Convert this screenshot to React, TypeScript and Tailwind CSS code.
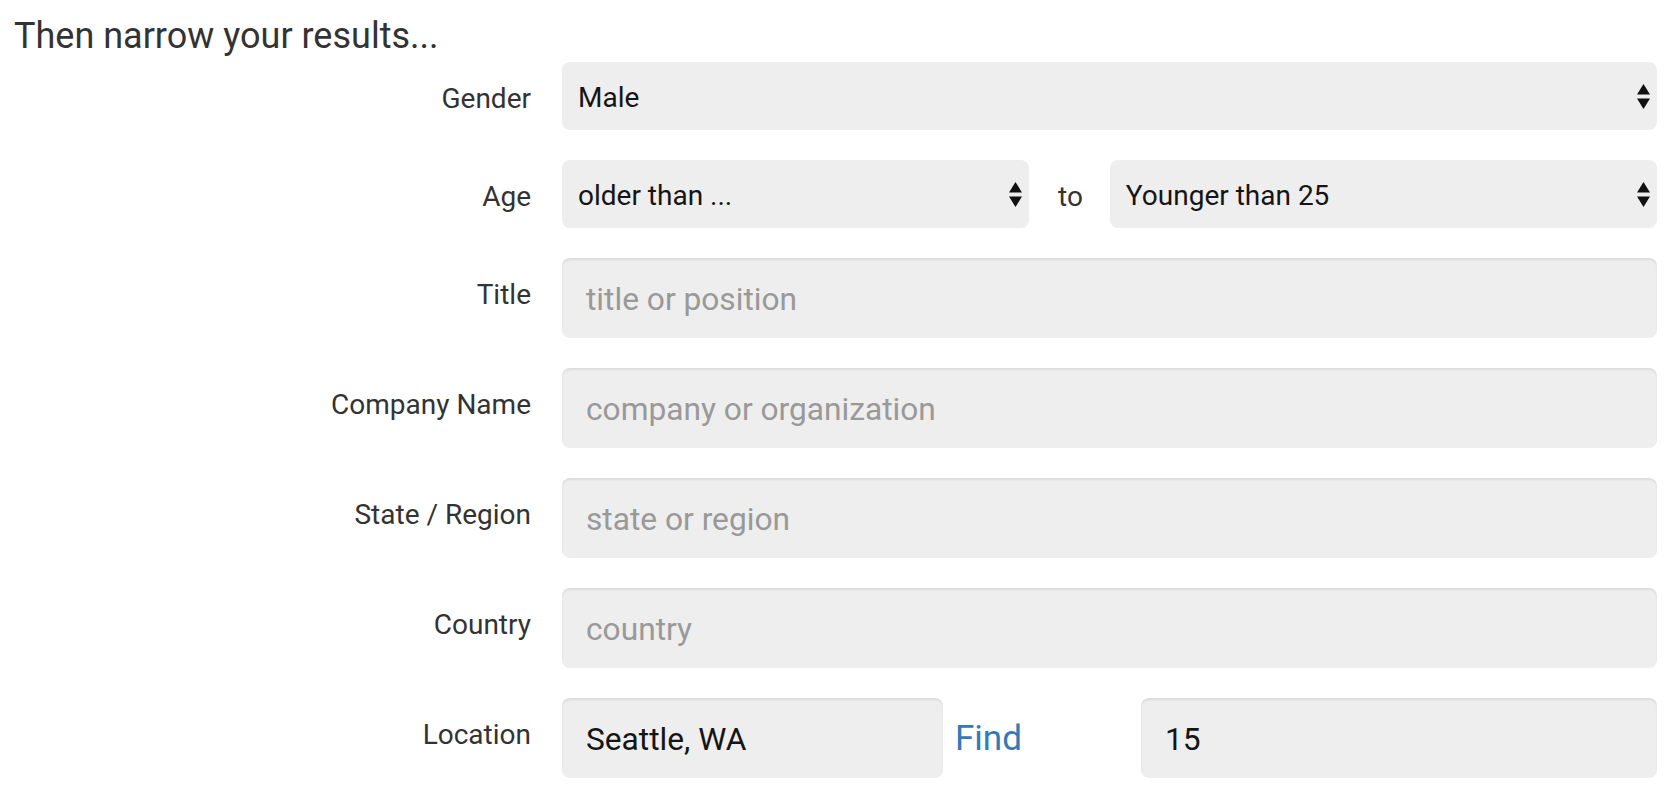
import React from "react";

const Arrows = () => (
  <svg width="13" height="25" viewBox="0 0 13 25" className="shrink-0">
    <polygon points="0,10.5 6.5,0 13,10.5" fill="#111" />
    <polygon points="0,14.5 13,14.5 6.5,25" fill="#111" />
  </svg>
);

const Select = ({ value, className = "" }: { value: string; className?: string }) => (
  <div
    className={`h-[68px] bg-[#eeeeee] rounded-[8px] flex items-center justify-between pl-[16px] pr-[7px] text-[28px] text-[#151515] ${className}`}
  >
    <span className="pt-[4px]">{value}</span>
    <Arrows />
  </div>
);

const Input = ({
  value,
  placeholder,
  className = "",
}: {
  value?: string;
  placeholder?: string;
  className?: string;
}) => (
  <div
    className={`h-[80px] bg-[#eeeeee] rounded-[8px] flex items-center pl-[24px] pt-[3px] text-[31.7px] shadow-[inset_0_2px_2px_rgba(0,0,0,0.075)] ${className}`}
  >
    {value ? (
      <span className="text-[#151515]">{value}</span>
    ) : (
      <span className="text-[#999999]">{placeholder}</span>
    )}
  </div>
);

const SelectRow = ({ label, children }: { label: string; children: React.ReactNode }) => (
  <div className="flex items-center">
    <div className="w-[517px] pt-[5px] text-right text-[28px] text-[#333333] shrink-0">{label}</div>
    <div className="ml-[31px] w-[1095px] flex items-center">{children}</div>
  </div>
);

const InputRow = ({ label, children }: { label: string; children: React.ReactNode }) => (
  <div className="flex items-start">
    <div className="w-[517px] text-right text-[28px] leading-[40px] pt-[17px] text-[#333333] shrink-0">
      {label}
    </div>
    <div className="ml-[31px] w-[1095px] flex items-center">{children}</div>
  </div>
);

export default function App() {
  return (
    <div
      className="w-[1674px] h-[792px] bg-white pl-[14px] pt-[15px] overflow-hidden"
      style={{ fontFamily: "Roboto, 'Noto Sans', sans-serif" }}
    >
      <h3 className="text-[36px] leading-[38px] pt-[2px] h-[47px] text-[#333333]">Then narrow your results...</h3>
      <div className="flex flex-col gap-[30px]">
        <SelectRow label="Gender">
          <Select value="Male" className="w-full" />
        </SelectRow>
        <SelectRow label="Age">
          <Select value="older than ..." className="w-[467px]" />
          <span className="ml-[29px] mr-[27px] pt-[5px] text-[28px] text-[#333333]">to</span>
          <Select value="Younger than 25" className="flex-1" />
        </SelectRow>
        <InputRow label="Title">
          <Input placeholder="title or position" className="w-full" />
        </InputRow>
        <InputRow label="Company Name">
          <Input placeholder="company or organization" className="w-full" />
        </InputRow>
        <InputRow label="State / Region">
          <Input placeholder="state or region" className="w-full" />
        </InputRow>
        <InputRow label="Country">
          <Input placeholder="country" className="w-full" />
        </InputRow>
        <InputRow label="Location">
          <Input value="Seattle, WA" className="w-[381px]" />
          <a className="ml-[12px] pt-[3px] text-[35px] text-[#337ab7]">Find</a>
          <Input value="15" className="ml-auto w-[516px]" />
        </InputRow>
      </div>
    </div>
  );
}
